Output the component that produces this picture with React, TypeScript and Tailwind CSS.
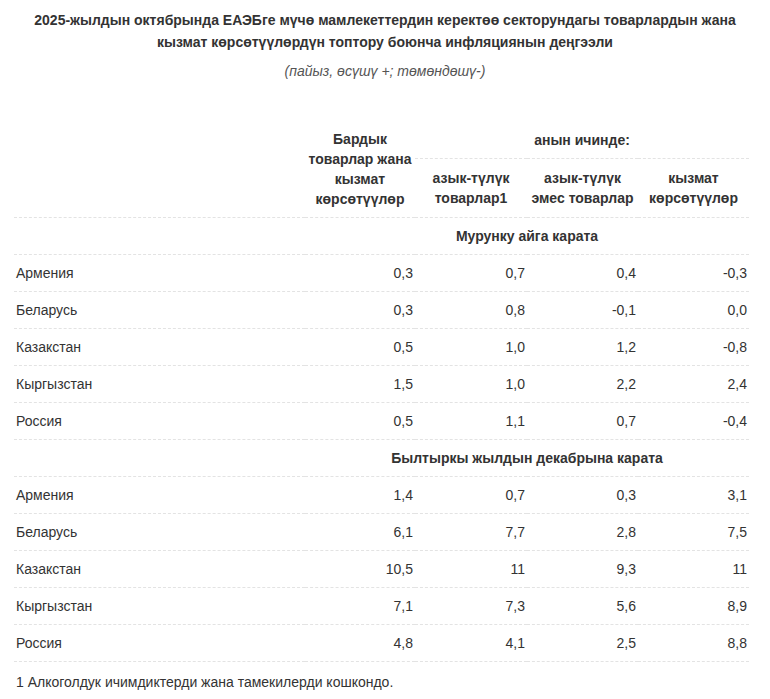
const monthly = [
  { country: "Армения", all: "0,3", food: "0,7", nonFood: "0,4", services: "-0,3" },
  { country: "Беларусь", all: "0,3", food: "0,8", nonFood: "-0,1", services: "0,0" },
  { country: "Казакстан", all: "0,5", food: "1,0", nonFood: "1,2", services: "-0,8" },
  { country: "Кыргызстан", all: "1,5", food: "1,0", nonFood: "2,2", services: "2,4" },
  { country: "Россия", all: "0,5", food: "1,1", nonFood: "0,7", services: "-0,4" },
];

const sinceDecember = [
  { country: "Армения", all: "1,4", food: "0,7", nonFood: "0,3", services: "3,1" },
  { country: "Беларусь", all: "6,1", food: "7,7", nonFood: "2,8", services: "7,5" },
  { country: "Казакстан", all: "10,5", food: "11", nonFood: "9,3", services: "11" },
  { country: "Кыргызстан", all: "7,1", food: "7,3", nonFood: "5,6", services: "8,9" },
  { country: "Россия", all: "4,8", food: "4,1", nonFood: "2,5", services: "8,8" },
];

type Row = (typeof monthly)[number];

const line = "border-b border-dashed border-[#e3e3e3]";

function SectionRow({ title }: { title: string }) {
  return (
    <tr className={line}>
      <td className="px-[2px] py-2"></td>
      <td colSpan={4} className="px-[2px] py-2 text-center font-bold">
        {title}
      </td>
    </tr>
  );
}

function DataRows({ rows }: { rows: Row[] }) {
  return (
    <>
      {rows.map((r) => (
        <tr key={r.country} className={line}>
          <td className="px-[2px] py-2 text-left">{r.country}</td>
          <td className="px-[2px] py-2 text-right">{r.all}</td>
          <td className="px-[2px] py-2 text-right">{r.food}</td>
          <td className="px-[2px] py-2 text-right">{r.nonFood}</td>
          <td className="px-[2px] py-2 text-right">{r.services}</td>
        </tr>
      ))}
    </>
  );
}

export default function App() {
  return (
    <div
      className="bg-white px-[14px] pt-[9px] text-[14px] leading-5 text-[#333]"
      style={{ fontFamily: '"Liberation Sans", Arial, sans-serif' }}
    >
      <h1 className="text-center text-[14px] font-bold leading-[22px] text-[#333]">
        2025-жылдын октябрында ЕАЭБге мүчө мамлекеттердин керектөө секторундагы товарлардын жана кызмат
        көрсөтүүлөрдүн топтору боюнча инфляциянын деңгээли
      </h1>
      <p className="mt-2 text-center italic text-[#555]">(пайыз, өсүшү +; төмөндөшү-)</p>

      <table className="mt-10 w-[735px] table-fixed border-collapse">
        <colgroup>
          <col className="w-[291px]" />
          <col className="w-[110px]" />
          <col className="w-[112px]" />
          <col className="w-[111px]" />
          <col className="w-[111px]" />
        </colgroup>
        <thead>
          <tr>
            <th rowSpan={2} className={`${line} px-[2px] py-2`}></th>
            <th rowSpan={2} className={`${line} px-[2px] py-2 text-center font-bold`}>
              Бардык товарлар жана кызмат көрсөтүүлөр
            </th>
            <th colSpan={3} className={`${line} px-[2px] py-2 text-center font-bold`}>
              анын ичинде:
            </th>
          </tr>
          <tr className={line}>
            <th className="px-[2px] py-2 text-center font-bold">
              азык-түлүк
              <br />
              товарлар1
            </th>
            <th className="px-[2px] py-2 text-center font-bold">
              азык-түлүк
              <br />
              эмес товарлар
            </th>
            <th className="px-[2px] py-2 text-center font-bold">
              кызмат
              <br />
              көрсөтүүлөр
            </th>
          </tr>
        </thead>
        <tbody>
          <SectionRow title="Мурунку айга карата" />
          <DataRows rows={monthly} />
          <SectionRow title="Былтыркы жылдын декабрына карата" />
          <DataRows rows={sinceDecember} />
        </tbody>
      </table>

      <p className="mt-[10px] pl-[2px]">1 Алкоголдук ичимдиктерди жана тамекилерди кошкондо.</p>
    </div>
  );
}
